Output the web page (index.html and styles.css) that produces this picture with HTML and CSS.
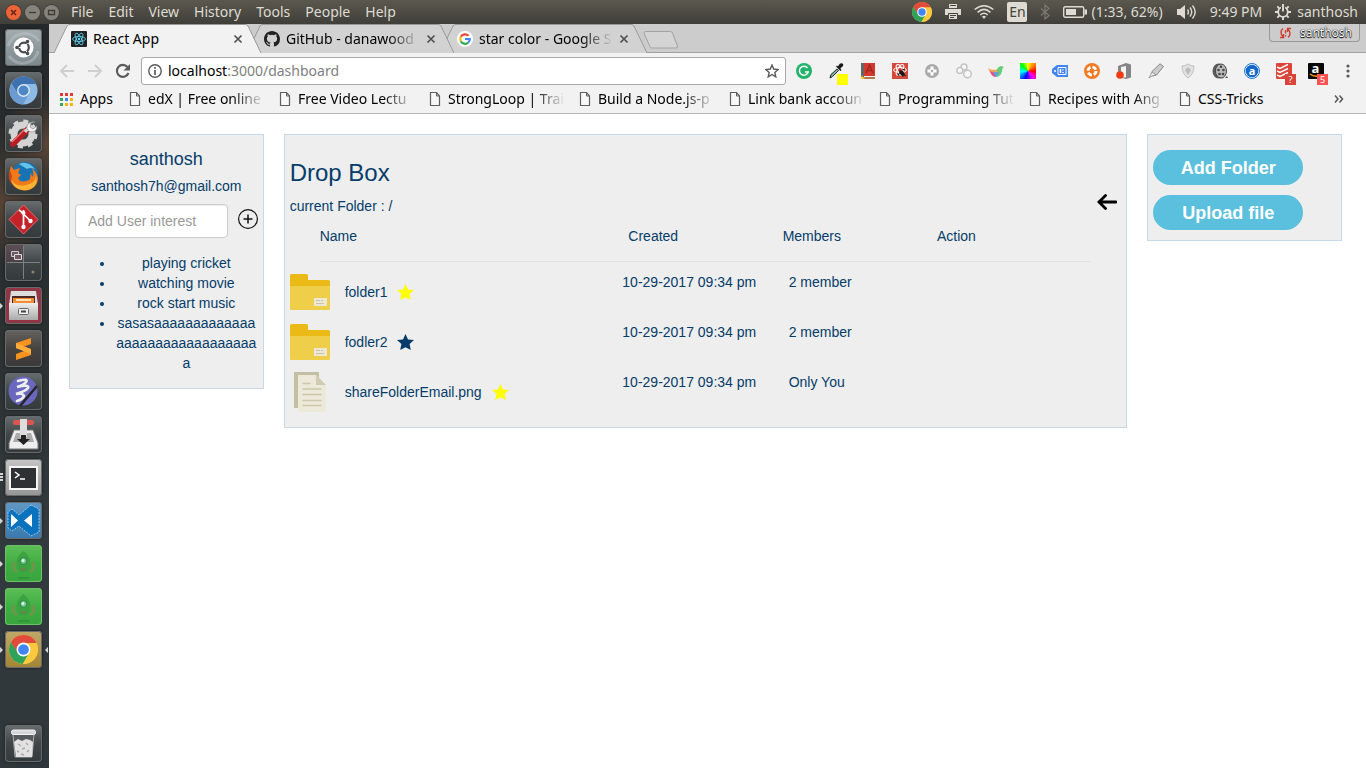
FILE: index.html
```html
<!DOCTYPE html>
<html lang="en">
<head>
<meta charset="utf-8">
<meta name="viewport" content="width=device-width, initial-scale=1">
<title>React App</title>
<link rel="stylesheet" href="styles.css">
</head>
<body>
<svg class="defs" aria-hidden="true">
  <defs>
    <linearGradient id="cabinet-gray" x1="0" y1="0" x2="0" y2="1"><stop offset="0" stop-color="#eee"/><stop offset="1" stop-color="#aaa"/></linearGradient>
  </defs>
  <symbol id="page" viewBox="0 0 12 14"><path d="M1.500 .5h6l3 3.500v9.500h-9z" fill="#f8f8f8" stroke="#5f5f5f" stroke-width="1.200"/><path d="M7.500 .5v3.500h3" fill="none" stroke="#5f5f5f"/></symbol>
  <symbol id="close" viewBox="0 0 10 10"><path d="M1.500 1.500l7 7M8.500 1.500l-7 7" stroke="#505050" stroke-width="1.700"/></symbol>
  <symbol id="chrome" viewBox="0 0 20 20"><circle cx="10" cy="10" r="10" fill="#fbc93d"/><path d="M10 5.500h8.900A10 10 0 0 0 1.340 5L6 13z" fill="#e24a3c"/><path d="M1.340 5A10 10 0 0 0 9.500 20L14 12.500 10 13 6 12z" fill="#2fa35a"/><path d="M10 5.500h8.900A10 10 0 0 1 9.500 20L14 12z" fill="#fbc93d"/><circle cx="10" cy="10" r="4.800" fill="#fff"/><circle cx="10" cy="10" r="3.700" fill="#4285f4"/></symbol>
  <symbol id="folder" viewBox="0 0 40 40"><path d="M0 3.500q0-1.500 1.500-1.500h15q1.500 0 1.500 1.500V8h20.500q1.500 0 1.500 1.500V16H0z" fill="#ebba16"/><path d="M0 14h40v22.500q0 1.500-1.500 1.500h-37Q0 38 0 36.500z" fill="#efce4a"/><path d="M24 26h13v8H24z" fill="#ece8d5"/><path d="M26 28.500h4M31 28.500h2M26 31.500h8" stroke="#c9c3a6"/></symbol>
  <symbol id="star" viewBox="0 0 17 17"><path d="M8.500 0l2.500 5.400 6 .7-4.400 4 1.200 6L8.500 13.200l-5.300 2.900 1.200-6L0 6.100l6-.7z" fill="currentColor"/></symbol>
  <symbol id="crawler" viewBox="0 0 37 37"><path d="M10 17c-3 4-2 8 2 10M27 17c3 4 2 8-2 10" fill="none" stroke="#77914f" stroke-width="2.500"/><path d="M18.500 6c-7 5-8 11-6 18 4 5 8 5 12 0 2-7 1-13-6-18z" fill="#3ba340"/><circle cx="18.500" cy="16" r="3.500" fill="#6fc48c" stroke="#2b8545"/><circle cx="18" cy="15.500" r="1.500" fill="#d8fbe0"/><path d="M15 22.500q3.500 2 7 0v2.500q-3.500 2-7 0z" fill="#5d8a45"/><path d="M13 33h11" stroke="#2a8535"/></symbol>
</svg>

<header class="panel">
  <div class="window-controls">
    <button class="win win-close" aria-label="Close"><svg viewBox="0 0 15 15"><path d="M5 5l5 5M10 5l-5 5" stroke="#5b2411" stroke-width="1.300"/></svg></button>
    <button class="win" aria-label="Minimize"><svg viewBox="0 0 15 15"><path d="M4 7.500h7" stroke="#3c3b37" stroke-width="1.300"/></svg></button>
    <button class="win" aria-label="Maximize"><svg viewBox="0 0 15 15"><path d="M4.500 5.500h6v4h-6z" fill="none" stroke="#3c3b37" stroke-width="1.300"/></svg></button>
  </div>
  <nav class="menu" aria-label="Application menu">
    <button>File</button><button>Edit</button><button>View</button><button>History</button><button>Tools</button><button>People</button><button>Help</button>
  </nav>
  <div class="indicators">
    <svg width="20" height="20"><use href="#chrome"/></svg>
    <svg width="16" height="16" viewBox="0 0 16 16"><path d="M4 0h8v4H4zM0 5h16v6h-3V9H3v2H0z" fill="#dfdbd2"/><path d="M3.500 9.500h9v6h-9z" fill="#dfdbd2" stroke="#45443f"/><path d="M5 11.500h6M5 13.500h4M5 1.500h6" stroke="#45443f"/></svg>
    <svg width="20" height="16" viewBox="0 0 20 16" fill="none" stroke="#dfdbd2" stroke-width="1.600"><path d="M.7 5.500Q10-2 19.300 5.500M3.600 8.300Q10 2.500 16.400 8.300M6.300 11Q10 7.500 13.700 11"/><path d="M8 12.500q2-1.500 4 0l-2 2.500z" fill="#dfdbd2" stroke="none"/></svg>
    <span class="lang">En</span>
    <svg width="10" height="16" viewBox="0 0 10 16"><path d="M1 4.500l8 7-4 3.500V1l4 3.500-8 7" fill="none" stroke="#7c7a73" stroke-width="1.200"/></svg>
    <span class="ind"><svg width="24" height="12" viewBox="0 0 24 12"><rect x=".7" y=".7" width="20" height="10.600" rx="1.500" fill="none" stroke="#dfdbd2" stroke-width="1.400"/><path d="M3 3h10v6H3zM21.500 3.500H24v5h-2.500z" fill="#dfdbd2"/></svg>(1:33, 62%)</span>
    <svg width="21" height="16" viewBox="0 0 21 16"><path d="M1 5h3l5-4v14l-5-4H1z" fill="#dfdbd2"/><path d="M11.500 5.500q2 2.500 0 5M14 3.500q3.500 4.500 0 9M16.500 1.500q5.500 6.500 0 13" fill="none" stroke="#dfdbd2" stroke-width="1.400"/></svg>
    <span class="clock">9:49 PM</span>
    <span class="ind user"><svg width="16" height="16" viewBox="0 0 16 16"><circle cx="8" cy="8" r="4.800" fill="none" stroke="#dfdbd2" stroke-width="1.800"/><path d="M8 2.500v5" stroke="#45443f" stroke-width="4"/><path d="M8 0v7.500M0 8h3M13 8h3M8 13v3M2.300 2.300l2 2M13.700 2.300l-2 2M2.300 13.700l2-2M13.700 13.700l-2-2" stroke="#dfdbd2" stroke-width="1.900"/></svg>santhosh</span>
  </div>
</header>

<div class="desktop">
  <aside class="dock" aria-label="Launcher">
    <button class="tile t-dash" aria-label="Dash"><svg viewBox="0 0 37 37"><path d="M3 17C8 2 27 1 34 12M4 27c9 12 26 8 29-5" fill="none" stroke="#c7d0d3" stroke-opacity=".4" stroke-width="3"/><circle cx="18.500" cy="18.500" r="10" fill="#fff"/><circle cx="19" cy="18.500" r="4.800" fill="none" stroke="#474b4d" stroke-width="2.200"/><path d="M18.500 18.500L25 11.500M18.500 18.500l6 8M19 18.500h-8" stroke="#fff"/><circle cx="12" cy="18.500" r="1.800" fill="#474b4d"/><circle cx="22.500" cy="12.500" r="1.800" fill="#474b4d"/><circle cx="22.500" cy="24.500" r="1.800" fill="#474b4d"/></svg></button>
    <button class="tile" aria-label="Chromium"><svg viewBox="0 0 37 37"><circle cx="18.500" cy="18.500" r="14" fill="#8ebbe6"/><path d="M18.500 12H31A14 14 0 0 0 6.500 11.500L13 22z" fill="#3e71ad"/><path d="M6.500 11.500A14 14 0 0 0 18 32.500L24 22 13 22z" fill="#6b9bd1"/><circle cx="18.500" cy="18.500" r="6.500" fill="#d8e9f8"/><circle cx="18.500" cy="18.500" r="5" fill="#4e86c6"/></svg></button>
    <button class="tile" aria-label="System settings"><svg viewBox="0 0 37 37"><circle cx="18" cy="19" r="9" fill="none" stroke="#d4d4d4" stroke-width="7"/><circle cx="18" cy="19" r="13" fill="none" stroke="#d4d4d4" stroke-width="3" stroke-dasharray="5 5.200"/><path d="M8 29L22 15" stroke="#b51e23" stroke-width="6" stroke-linecap="round"/><path d="M7 27L20 14" stroke="#ea6d68" stroke-width="1.500"/><path d="M20 17l5-6" stroke="#ddd" stroke-width="3"/><path d="M30 7l-4 1-1 4 3 2 4-3q0 6-6 6-5-1-4-6 2-5 8-4z" fill="#f2f2f2" stroke="#888" stroke-width=".7"/></svg></button>
    <button class="tile" aria-label="Firefox"><svg viewBox="0 0 37 37"><circle cx="20" cy="17" r="13" fill="#1873b4"/><path d="M14 6q8-4 16 5-5-2-8 0z" fill="#63c4e8"/><path d="M5 12l1-4 3 4 6-2-2 5 3 2-3 3q2 5 8 3 6-1 4-8l3 4q1-5-1-9 10 10 3 18-8 8-18 2Q2 24 5 12z" fill="#f27a18"/><path d="M5 18q3 12 16 9 10-2 10-10 3 13-9 15Q8 34 5 18z" fill="#ffb332"/><path d="M5 12l2 6-1 7Q2 20 5 12z" fill="#cc451b"/></svg></button>
    <button class="tile" aria-label="Git"><svg viewBox="0 0 37 37"><path d="M18.500 4L33 18.500 18.500 33 4 18.500z" fill="#c52128" stroke="#ee6869" stroke-linejoin="round"/><path d="M18.500 9v18M18.500 13l7 7M14 9l5 4" stroke="#fff" stroke-width="1.700"/><circle cx="18.500" cy="26" r="2.200" fill="#fff"/><circle cx="25.500" cy="20" r="2.200" fill="#fff"/><circle cx="18.500" cy="12" r="2" fill="#fff"/></svg></button>
    <button class="tile" aria-label="Workspaces"><svg viewBox="0 0 37 37"><path d="M1 1h17v17H1z" fill="#563a45" fill-opacity=".6"/><path d="M18.500 2v33M2 18.500h33" stroke="#7b8081"/><path d="M6.500 7.500h7v5h-7z" fill="#6c5861" stroke="#ccc"/><path d="M9.500 10.500h7v5h-7z" fill="#6c5861" stroke="#ddd"/><circle cx="28" cy="28" r="1.500" fill="#8c846d"/></svg></button>
    <button class="tile t-files run" aria-label="Files"><svg viewBox="0 0 37 37"><path d="M6 4h25l2 14H4z" fill="#ddd"/><path d="M7 9h23v9H7z" fill="#4b2822"/><path d="M8 11h21v6H8z" fill="#f58b34"/><path d="M11 13h15" stroke="#ffe0b3" stroke-width="2"/><path d="M4 16h29v17H4z" fill="url(#cabinet-gray)"/><rect x="13.500" y="21.500" width="10" height="6" rx="1" fill="#eee" stroke="#666"/><path d="M16 24.500h5" stroke="#444" stroke-width="2"/></svg></button>
    <button class="tile t-dark" aria-label="Sublime Text"><svg viewBox="0 0 37 37"><path d="M11 13l15-5v6l-8 3 8 3v5l-15 5v-6l8-3-8-3z" fill="#f7931e"/><path d="M11 13l15 6v5l-15-6z" fill="#ffac3c"/></svg></button>
    <button class="tile" aria-label="Emacs"><svg viewBox="0 0 37 37"><circle cx="18" cy="18" r="14.500" fill="#6a67bf"/><path d="M13 8q11-3 8 1-2 3-9 5 13-3 11 1-2 3-12 6 7-1 8 2-1 3-7 5" fill="none" stroke="#eee" stroke-width="2.600" stroke-linecap="round"/><path d="M15 33L32 13" stroke="#252525" stroke-width="2.500"/></svg></button>
    <button class="tile" aria-label="Startup disk"><svg viewBox="0 0 37 37"><path d="M9 14h19l5 13v6H4v-6z" fill="#eee" stroke="#777"/><path d="M11 17h15l3 9H8z" fill="#aaa"/><rect x="8" y="4" width="21" height="5" rx="2" fill="#dc5555"/><path d="M15 3h7v18h-7z" fill="#ddd"/><path d="M16 19h5v4h4l-6.500 6L12 23h4z" fill="#222"/></svg></button>
    <button class="tile t-silver windows" aria-label="Terminal"><svg viewBox="0 0 37 37"><path d="M5 8h27v22H5z" fill="#2e3033" stroke="#f4f4f4" stroke-width="2"/><path d="M10 13l4 3-4 3M15 20h5" fill="none" stroke="#fff" stroke-width="1.500"/></svg></button>
    <button class="tile t-code run" aria-label="VS Code"><svg viewBox="0 0 37 37"><path d="M26 3l8 4v23l-8 4-12-10-7 5-4-3V10l4-3 7 6z" fill="#0b72bd" stroke="#8ec5eb" stroke-dasharray="2 1"/><path d="M6 12l7 6.500L6 25zM27 12v13l-8-6.500z" fill="#fff"/></svg></button>
    <button class="tile t-green run" aria-label="Robomongo"><svg><use href="#crawler"/></svg></button>
    <button class="tile t-green run" aria-label="Robomongo"><svg><use href="#crawler"/></svg></button>
    <button class="tile t-chrome run active" aria-label="Chrome"><svg viewBox="0 0 37 37"><use href="#chrome" x="4" y="4" width="29" height="29"/></svg></button>
    <button class="tile trash" aria-label="Trash"><svg viewBox="0 0 37 37"><path d="M8 9l2 23h17l2-23z" fill="#565c5e" stroke="#aaa"/><path d="M9 17l4-3 4 2 4-2 4 1 3 2-1 15H11z" fill="#e2e2e2"/><path d="M13 19l3 2M21 18l2 2M17 24l3-1M12 26l2 1M24 25l-2 2M16 29l3 1" fill="none" stroke="#aaa" stroke-width="1.500"/><rect x="6.500" y="5" width="24" height="4.500" rx="2" fill="#d5d8d8" stroke="#f5f5f5"/></svg></button>
  </aside>

  <div class="browser">
    <div class="tabs">
      <div class="tab current">
        <svg class="tab-shape" viewBox="0 0 207 29" preserveAspectRatio="none"><path d="M0 29L13 2q1-1.500 3-1.500h175q2 0 3 1.500L207 29" fill="#f2f2f2" stroke="#999"/></svg>
        <svg class="fav" viewBox="0 0 16 16"><rect width="16" height="16" rx="1" fill="#222"/><g fill="none" stroke="#61dafb" stroke-width=".8"><ellipse cx="8" cy="8" rx="6.500" ry="2.500"/><ellipse cx="8" cy="8" rx="6.500" ry="2.500" transform="rotate(60 8 8)"/><ellipse cx="8" cy="8" rx="6.500" ry="2.500" transform="rotate(120 8 8)"/></g><circle cx="8" cy="8" r="1.200" fill="#61dafb"/></svg>
        <span class="tab-title">React App</span><button class="tab-close" aria-label="Close tab"><svg><use href="#close"/></svg></button>
      </div>
      <div class="tab second">
        <svg class="tab-shape" viewBox="0 0 207 29" preserveAspectRatio="none"><path d="M0 29L13 2q1-1.500 3-1.500h175q2 0 3 1.500L207 29" fill="#d2d2d2" stroke="#999"/></svg>
        <svg class="fav" viewBox="0 0 16 16"><path fill="#222" d="M8 0C3.580 0 0 3.580 0 8c0 3.540 2.290 6.530 5.470 7.590.4.070.55-.17.55-.38 0-.19-.01-.82-.01-1.490-2.010.37-2.530-.49-2.690-.94-.09-.23-.48-.94-.82-1.130-.28-.15-.68-.52-.01-.53.630-.01 1.080.58 1.230.82.720 1.210 1.870.87 2.330.66.070-.52.28-.87.510-1.070-1.780-.2-3.640-.89-3.640-3.950 0-.87.31-1.590.82-2.150-.08-.2-.36-1.020.08-2.120 0 0 .67-.21 2.200.82a7.400 7.400 0 014 0c1.530-1.040 2.200-.82 2.200-.82.44 1.100.16 1.920.08 2.120.51.560.82 1.270.82 2.150 0 3.070-1.870 3.750-3.650 3.950.29.250.54.730.54 1.480 0 1.070-.01 1.930-.01 2.200 0 .21.15.46.55.38A8 8 0 0016 8c0-4.420-3.580-8-8-8z"/></svg>
        <span class="tab-title fade">GitHub - danawood</span><button class="tab-close" aria-label="Close tab"><svg><use href="#close"/></svg></button>
      </div>
      <div class="tab">
        <svg class="tab-shape" viewBox="0 0 207 29" preserveAspectRatio="none"><path d="M0 29L13 2q1-1.500 3-1.500h175q2 0 3 1.500L207 29" fill="#d2d2d2" stroke="#999"/></svg>
        <svg class="fav" viewBox="0 0 16 16"><circle cx="8" cy="8" r="8" fill="#fff"/><g fill="none" stroke-width="2.200"><path d="M11.500 4.800A4.800 4.800 0 0 0 3.800 5.800" stroke="#ea4335"/><path d="M3.800 5.800a4.800 4.800 0 0 0 0 4.400" stroke="#fbbc05"/><path d="M3.800 10.200a4.800 4.800 0 0 0 7.500 1.300" stroke="#34a853"/><path d="M11.300 11.500A4.800 4.800 0 0 0 12.800 8H8" stroke="#4285f4"/></g></svg>
        <span class="tab-title fade">star color - Google S</span><button class="tab-close" aria-label="Close tab"><svg><use href="#close"/></svg></button>
      </div>
      <button class="new-tab" aria-label="New tab"><svg viewBox="0 0 36 18"><path d="M2.500 .5h25q1.500 0 2 1.500l5 13q.5 2-1.500 2H9q-1.500 0-2-1.500L1 2.500Q.5.500 2.500.5z" fill="#d4d4d4" stroke="#a2a2a2"/></svg></button>
      <button class="profile"><svg width="13" height="12" viewBox="0 0 13 12"><path d="M4 1.500a5 5 0 0 0 0 8M1 10.500h3.500V7M9 10.500a5 5 0 0 0 0-8M12 1.500H8.500V5" fill="none" stroke="#d3392d" stroke-width="1.400"/><path d="M6.500 3v3.500M6.500 8v1.500" stroke="#d3392d" stroke-width="1.300"/></svg><span>santhosh</span></button>
    </div>

    <div class="toolbar">
      <button class="nav-btn" aria-label="Back"><svg viewBox="0 0 16 16"><path d="M15 8H2M8 2L2 8l6 6" fill="none" stroke="#cfcfcf" stroke-width="2"/></svg></button>
      <button class="nav-btn" aria-label="Forward"><svg viewBox="0 0 16 16"><path d="M1 8h13M8 2l6 6-6 6" fill="none" stroke="#cfcfcf" stroke-width="2"/></svg></button>
      <button class="nav-btn" aria-label="Reload"><svg viewBox="0 0 16 16"><path d="M13.500 10A6 6 0 1 1 12.500 4" fill="none" stroke="#5a5a5a" stroke-width="2.100"/><path d="M15 1v6.500H8.500z" fill="#5a5a5a"/></svg></button>
      <div class="omnibox">
        <svg width="14" height="14" viewBox="0 0 14 14"><circle cx="7" cy="7" r="6.200" fill="none" stroke="#5a5a5a" stroke-width="1.400"/><path d="M7 3v1.700M7 6v5" stroke="#5a5a5a" stroke-width="1.700"/></svg>
        <a class="url" href="#dashboard">localhost<span>:3000/dashboard</span></a>
        <svg width="14" height="14" viewBox="0 0 14 14"><path d="M7 1l1.700 4 4.500.5-3.400 3 1 4.400L7 10.500l-3.800 2.400 1-4.400-3.400-3 4.500-.5z" fill="none" stroke="#5a5a5a" stroke-width="1.400"/></svg>
      </div>
      <div class="extensions">
        <button aria-label="Grammarly"><svg viewBox="0 0 16 16"><circle cx="8" cy="8" r="8" fill="#24b36b"/><path d="M11.500 5a4.500 4.500 0 1 0 .7 4H9" fill="none" stroke="#fff" stroke-width="1.500"/></svg></button>
        <button aria-label="Color picker"><svg viewBox="0 0 16 16"><path d="M2 15l1-3.500L9 6l1.500 1.500-6 6z" fill="#82bc9c" stroke="#222"/><path d="M8 3.500L12.500 8l1-1-1.200-1.500L15 3q.8-1.500-.5-2.500Q13-.3 11.500 1L10 3.500 9 2.500z" fill="#181818"/></svg><i class="badge yellow"></i></button>
        <button aria-label="Dictionary"><svg viewBox="0 0 16 16"><path d="M1 0h3v14H1z" fill="#666"/><path d="M4 0h11v13H4z" fill="#d33a2f"/><path d="M6 10l3.500-8L13 10M7.500 7.500h4" fill="none" stroke="#a12720" stroke-width="1.500"/><path d="M2 14h13v2H4z" fill="#ad7a50"/><path d="M2 12l1 2 2 .5-1.500 1.500H1z" fill="#ffbf21"/></svg></button>
        <button aria-label="React tools"><svg viewBox="0 0 16 16"><rect width="16" height="16" fill="#d5493c"/><g fill="none" stroke="#fff"><ellipse cx="8" cy="7" rx="6.500" ry="2.500"/><ellipse cx="8" cy="7" rx="6" ry="2.500" transform="rotate(60 8 7)"/><ellipse cx="8" cy="7" rx="6" ry="2.500" transform="rotate(120 8 7)"/></g><path d="M7 7l4 1 2 3-2 3-3-3z" fill="#171717"/><path d="M8 9l-2 4M10 7l3-1M12 12l2 1" stroke="#171717"/></svg></button>
        <button aria-label="Gamepad"><svg viewBox="0 0 16 16"><circle cx="8" cy="8" r="7" fill="#aaa"/><path d="M6.500 3.500h3v3h3v3h-3v3h-3v-3h-3v-3h3z" fill="#fff"/><circle cx="8" cy="8" r="1.300" fill="#aaa"/></svg></button>
        <button aria-label="Circles"><svg viewBox="0 0 16 16" fill="#f7f7f7" stroke="#c4c4c4" stroke-width="1.500"><circle cx="8" cy="4" r="3"/><circle cx="3.800" cy="7.500" r="3"/><circle cx="11.500" cy="11" r="3.800"/></svg></button>
        <button aria-label="Bird"><svg viewBox="0 0 16 16"><path d="M0 5q6 4 11 0 1 7-5 7Q2 11 0 5z" fill="#ffa253"/><path d="M2 8q6 3 9 0 0 6-4 6-4-1-5-6z" fill="#ea4b87"/><path d="M9 8q0-4 4-5l3 1q-2 1-2 4-1 6-7 6 3-2 2-6z" fill="#63ce77"/><path d="M5 8q3 3 6 1-1 4-4 4z" fill="#4eabed"/></svg></button>
        <button aria-label="Color wheel"><i class="wheel"></i></button>
        <button aria-label="Tag"><svg viewBox="0 0 16 16"><path d="M5 2h11v12H5L0 10V6z" fill="#4285f4"/><path d="M6 4.500h8v7H6z" fill="none" stroke="#fff"/><path d="M8.500 6v4M11 6.500v1M11 9v1" stroke="#fff" stroke-width="1.500"/><circle cx="3" cy="8" r="1" fill="#fff"/></svg></button>
        <button aria-label="Orange disc"><svg viewBox="0 0 16 16"><circle cx="8" cy="8" r="8" fill="#f37a24"/><circle cx="8" cy="8" r="4" fill="none" stroke="#fff" stroke-width="2.800" stroke-dasharray="4.300 2"/></svg></button>
        <button aria-label="Office"><svg viewBox="0 0 16 16"><path d="M2 3l8-3 5 1.500v13L10 16l-7-2 7 .5V3L5 4v6l-3 1z" fill="#858585"/><circle cx="4" cy="12" r="3.800" fill="#f33a10"/></svg></button>
        <button aria-label="Highlighter"><svg viewBox="0 0 16 16"><path d="M4 8.500L12 .8l3.500 2.700L8.500 12l-4 1z" fill="#ccc" stroke="#888"/><path d="M4 9l4 3-4 1-3 2z" fill="#eee" stroke="#888" stroke-width=".8"/></svg></button>
        <button aria-label="Shield"><svg viewBox="0 0 16 16"><path d="M8 1q3 2 6 2 0 8-6 12Q2 11 2 3q3 0 6-2z" fill="#e2e2e2" stroke="#c2c2c2"/><path d="M8 4l3 3-3 5-3-5z" fill="#bbb"/></svg></button>
        <button aria-label="Film"><svg viewBox="0 0 16 16"><ellipse cx="6.500" cy="8" rx="6" ry="7.500" fill="#5c5c5c"/><ellipse cx="9" cy="8" rx="5.500" ry="7" fill="#bbb" stroke="#444"/><g fill="#444"><circle cx="9" cy="3.800" r="1.300"/><circle cx="6.500" cy="7" r="1.300"/><circle cx="11.500" cy="7" r="1.300"/><circle cx="7.500" cy="11" r="1.300"/><circle cx="11" cy="11" r="1.300"/></g><path d="M9 15q4 1 6-2l1 2z" fill="#555"/></svg></button>
        <button aria-label="Assistant"><svg viewBox="0 0 16 16"><circle cx="8" cy="8" r="7.500" fill="#fff" stroke="#1976d2"/><circle cx="8" cy="8" r="6.300" fill="#1267c8"/><text x="8" y="11.500" class="ico-text">a</text></svg></button>
        <button aria-label="Todoist"><svg viewBox="0 0 16 16"><rect width="16" height="16" rx="1" fill="#dc4437"/><path d="M1 4l3 1.500 8-4M1 8l3 1.500 8-4M1 12l3 1.500 8-4" fill="none" stroke="#fff" stroke-width="1.500"/></svg><i class="badge dark-red">?</i></button>
        <button aria-label="Amazon"><svg viewBox="0 0 16 16"><rect width="16" height="16" rx="1" fill="#080808"/><text x="7.500" y="10" class="ico-text big">a</text><path d="M2 11q5 4 11 1" fill="none" stroke="#f90" stroke-width="1.500"/></svg><i class="badge red">5</i></button>
        <button aria-label="Menu"><svg viewBox="0 0 16 16" fill="#5a5a5a"><circle cx="8" cy="3" r="1.600"/><circle cx="8" cy="8" r="1.600"/><circle cx="8" cy="13" r="1.600"/></svg></button>
      </div>
    </div>

    <nav class="bookmarks" aria-label="Bookmarks">
      <a class="apps" href="#apps"><svg width="13" height="13" viewBox="0 0 13 13"><path d="M0 0h3v3H0zM5 0h3v3H5zM10 0h3v3h-3z" fill="#e53935"/><path d="M0 5h3v3H0z" fill="#34a853"/><path d="M5 5h3v3H5z" fill="#4285f4"/><path d="M10 5h3v3h-3z" fill="#f4b400"/><path d="M0 10h3v3H0z" fill="#34a853"/><path d="M5 10h3v3H5zM10 10h3v3h-3z" fill="#f4b400"/></svg>Apps</a>
      <a href="#b1"><svg><use href="#page"/></svg><span class="fade">edX | Free online</span></a>
      <a href="#b2"><svg><use href="#page"/></svg><span class="fade">Free Video Lectu</span></a>
      <a href="#b3"><svg><use href="#page"/></svg><span class="fade">StrongLoop | Trai</span></a>
      <a href="#b4"><svg><use href="#page"/></svg><span class="fade">Build a Node.js-p</span></a>
      <a href="#b5"><svg><use href="#page"/></svg><span class="fade">Link bank accoun</span></a>
      <a href="#b6"><svg><use href="#page"/></svg><span class="fade">Programming Tut</span></a>
      <a href="#b7"><svg><use href="#page"/></svg><span class="fade">Recipes with Ang</span></a>
      <a href="#b8"><svg><use href="#page"/></svg><span>CSS-Tricks</span></a>
      <button class="more" aria-label="More bookmarks"><svg width="10" height="8" viewBox="0 0 10 8"><path d="M1 .5L4 4 1 7.500M5.500 .5l3 3.500-3 3.500" fill="none" stroke="#555" stroke-width="1.500"/></svg></button>
    </nav>

    <main class="page">
      <aside class="card profile-card">
        <h4>santhosh</h4>
        <p>santhosh7h@gmail.com</p>
        <form class="interest">
          <input type="text" placeholder="Add User interest" aria-label="Add User interest">
          <button type="button" aria-label="Add"><svg width="20" height="20" viewBox="0 0 20 20"><circle cx="10" cy="10" r="9.400" fill="none" stroke="#111" stroke-width="1.200"/><path d="M10 5.500v9M5.500 10h9" stroke="#111" stroke-width="1.500"/></svg></button>
        </form>
        <ul>
          <li>playing cricket</li><li>watching movie</li><li>rock start music</li><li>sasasaaaaaaaaaaaaaaaaaaaaaaaaaaaaaaaa</li>
        </ul>
      </aside>

      <section class="card">
        <div class="box-head">
          <div><h3>Drop Box</h3><p>current Folder : /</p></div>
          <button class="back" aria-label="Parent folder"><svg width="20" height="16" viewBox="0 0 20 16"><path d="M19 8H2M8.500 1.500L2 8l6.500 6.500" fill="none" stroke="#000" stroke-width="2.800" stroke-linecap="round"/></svg></button>
        </div>
        <table class="files">
          <thead><tr><th>Name</th><th>Created</th><th>Members</th><th>Action</th></tr></thead>
          <tbody>
            <tr><td><div class="file"><svg class="file-icon"><use href="#folder"/></svg>folder1<button class="star on" aria-label="Unstar"><svg><use href="#star"/></svg></button></div></td><td>10-29-2017 09:34 pm</td><td>2 member</td><td></td></tr>
            <tr><td><div class="file"><svg class="file-icon"><use href="#folder"/></svg>fodler2<button class="star" aria-label="Star"><svg><use href="#star"/></svg></button></div></td><td>10-29-2017 09:34 pm</td><td>2 member</td><td></td></tr>
            <tr><td><div class="file"><svg class="file-icon" viewBox="0 0 40 40"><path d="M4 0h29v36H4z" fill="#c3bfa3"/><path d="M8 3h18l10 10v27H8z" fill="#ece9d8"/><path d="M26 3V0h10v13z" fill="#eee"/><path d="M26 0h3v6l-3-3z" fill="#c3bfa3"/><path d="M26 3l10 10H26z" fill="#d0cbb3"/><path d="M13 11.500h7M13 17h18M13 22.500h18M13 28.500h18M13 33.500h18" stroke="#ccc7ac" stroke-width="1.300" stroke-linecap="round"/></svg>shareFolderEmail.png<button class="star on" aria-label="Unstar"><svg><use href="#star"/></svg></button></div></td><td>10-29-2017 09:34 pm</td><td>Only You</td><td></td></tr>
          </tbody>
        </table>
      </section>

      <aside class="card actions">
        <button>Add Folder</button>
        <button>Upload file</button>
      </aside>
    </main>
  </div>
</div>
</body>
</html>
```
FILE: styles.css
```css
* { box-sizing: border-box; }
body {
  margin: 0;
  min-height: 100vh;
  display: flex;
  flex-direction: column;
  font: 14px/20px "Noto Sans", sans-serif;
  background: #fff;
}
button { margin: 0; padding: 0; border: 0; background: none; font: inherit; color: inherit; }
a { color: inherit; text-decoration: none; }
svg { display: block; flex: none; }
h3, h4, p, ul { margin: 0; font-weight: normal; }
.defs { position: absolute; width: 0; height: 0; }
.fade { mask-image: linear-gradient(90deg, #000 calc(100% - 32px), transparent); }

/* Desktop panel */
.panel {
  display: flex;
  align-items: center;
  height: 24px;
  padding: 0 8px 0 6px;
  color: #dfdbd2;
  background: linear-gradient(#5b584e, #3f3e39);
  white-space: nowrap;
}
.window-controls { display: flex; gap: 4px; margin-right: 12px; }
.win { width: 15px; height: 15px; border-radius: 8px; background: #85837b; box-shadow: 0 0 0 1px #45433d; }
.win-close { background: #ee6338; }
.menu { display: flex; gap: 15px; flex: 1; }
.indicators { display: flex; align-items: center; gap: 13px; }
.lang { width: 20px; line-height: 20px; border-radius: 2px; background: #dfdbd2; color: #45433d; text-align: center; }
.ind { display: flex; align-items: center; gap: 4px; }
.user { gap: 6px; }

/* Launcher */
.desktop { display: flex; flex: 1; }
.dock {
  display: flex;
  flex-direction: column;
  gap: 6px;
  width: 49px;
  padding: 5px 7px 6px 5px;
  background:
    radial-gradient(circle at 90% 120px, #5b4638 0, transparent 50px),
    radial-gradient(circle at 0 180px, #574335 0, transparent 60px),
    linear-gradient(#25292b, #2b3031 300px, #333a3d 500px, #30373a);
}
.tile {
  position: relative;
  width: 37px;
  height: 37px;
  border-radius: 4px;
  background: linear-gradient(#686d6f, #404546 50%, #343a3c);
  box-shadow: inset 0 0 0 1px #666b6d, 0 0 3px #0008;
}
.tile svg { width: 37px; height: 37px; }
.t-dash { background: linear-gradient(#a3acaf, #7c888c); }
.t-files { background: #8f3544; }
.t-dark { background: linear-gradient(#66625f, #464341 50%, #3b3937); }
.t-silver { background: linear-gradient(#c4c4c4, #959595); }
.t-code { background: linear-gradient(#6198c4, #3978ae); }
.t-green { background: linear-gradient(#5ebd57, #3fae42 50%, #38a53d); box-shadow: inset 0 0 0 1px #6cc067; }
.t-chrome { background: linear-gradient(#c0a868, #a38434); }
.run::before, .active::after {
  content: "";
  position: absolute;
  top: 16px;
  left: -5px;
  border: 3px solid transparent;
  border-left-color: #d5d5d5;
  border-right-width: 0;
}
.active::after { left: 40px; border-width: 3px 3px 3px 0; border-right-color: #d5d5d5; }
.windows::before {
  content: "";
  position: absolute;
  top: 14px;
  left: -5px;
  width: 3px;
  height: 8px;
  background: repeating-linear-gradient(#d5d5d5 0 2px, transparent 2px 3px);
}
.trash { margin-top: auto; }

/* Browser chrome */
.browser { display: flex; flex-direction: column; flex: 1; min-width: 0; }
.tabs { display: flex; height: 29px; padding: 0 6px 0 5px; background: #ccc; border-bottom: 1px solid #a0a0a0; }
.tab {
  position: relative;
  isolation: isolate;
  display: flex;
  align-items: center;
  width: 207px;
  height: 29px;
  margin-right: -14px;
  padding: 0 17px;
}
.second { z-index: 1; }
.current { z-index: 2; }
.tab-shape { position: absolute; inset: 0; width: 100%; height: 100%; z-index: -1; }
.fav { width: 16px; height: 16px; margin-right: 6px; }
.tab-title, .bookmarks span { flex: 1; overflow: hidden; white-space: nowrap; }
.tab-close { margin-left: 6px; padding-right: 1px; }
.tab-close svg { width: 10px; height: 10px; }
.new-tab { margin: 7px 0 0 10px; align-self: flex-start; }
.new-tab svg { width: 36px; height: 18px; }
.profile {
  display: flex;
  align-items: center;
  gap: 8px;
  height: 18px;
  margin-left: auto;
  padding: 0 7px 0 9px;
  border: 1px solid #999;
  border-top: 0;
  border-radius: 0 0 4px 4px;
  font-size: 12px;
  color: #fff;
  text-shadow: 0 0 1px #000, 0 0 1px #000, 0 1px 1px #000;
}

.toolbar { display: flex; align-items: center; height: 36px; padding: 0 2px 0 4px; background: #f2f2f2; }
.nav-btn { display: grid; place-items: center; width: 28px; height: 28px; }
.nav-btn svg { width: 16px; height: 16px; }
.omnibox {
  display: flex;
  align-items: center;
  flex: 1;
  gap: 6px;
  height: 28px;
  margin-left: 4px;
  padding: 0 6px;
  border: 1px solid #a8a8a8;
  border-radius: 3px;
  background: #fff;
}
.url { flex: 1; color: #000; }
.url span { color: #808080; }
.extensions { display: flex; margin-left: 2px; }
.extensions button { position: relative; display: grid; place-items: center; width: 32px; height: 28px; }
.extensions svg { width: 16px; height: 16px; overflow: visible; }
.badge { position: absolute; left: 17px; top: 17px; width: 11px; height: 11px; font: 9px/11px "Noto Sans", sans-serif; color: #fff; }
.yellow { background: #ff0; }
.dark-red { background: #d9453b; }
.red { background: #ff5252; }
.wheel { width: 16px; height: 16px; background: conic-gradient(#ff0, #f00 90deg, #f0f 140deg, #00f 200deg, #0ff 265deg, #0f0 315deg, #ff0); }
.ico-text { font: bold 11px "Open Sans", sans-serif; fill: #fff; text-anchor: middle; }
.big { font-size: 13px; }

.bookmarks { display: flex; height: 25px; align-items: center; padding: 0 20px 4px 11px; background: #f2f2f2; border-bottom: 1px solid #b6b6b6; color: #000; }
.bookmarks a { display: flex; align-items: center; gap: 7px; width: 150px; padding-right: 14px; }
.bookmarks a svg { width: 12px; height: 14px; }
.bookmarks .apps { width: 69px; padding: 0; }
.bookmarks .apps svg { width: 13px; height: 13px; }
.more { margin-left: auto; padding-right: 2px; }

/* Dashboard */
.page {
  display: grid;
  grid-template-columns: minmax(0, 3fr) minmax(0, 13fr) minmax(0, 3fr);
  align-items: start;
  gap: 20px;
  padding: 20px 24px 20px 20px;
  font-family: "Liberation Sans", Arial, sans-serif;
  color: #053c69;
}
.card { padding: 5px; border: 1px solid #c9d8e6; background: #eee; }
.profile-card { text-align: center; }
.profile-card h4 { margin: 9px 0 7px; font-size: 18px; }
.interest { display: flex; gap: 10px; margin: 8px 0 15px; }
.interest input {
  flex: 1;
  min-width: 0;
  height: 34px;
  padding: 6px 12px;
  border: 1px solid #ccc;
  border-radius: 4px;
  background: #fff;
  font: inherit;
  box-shadow: inset 0 1px 1px #00000013;
}
.interest input::placeholder { color: #999; }
.interest button { align-self: flex-start; margin-top: 5px; }
.profile-card ul { margin-bottom: 10px; padding-left: 40px; overflow-wrap: break-word; }

.box-head { display: flex; justify-content: space-between; align-items: flex-end; }
.box-head h3 { margin: 20px 0 10px; font-size: 24px; line-height: 26px; }
.back { margin: 0 4px 6px 0; }
.files, .files thead, .files tbody { display: block; }
.files th { padding: 0; font-weight: normal; text-align: left; }
.files td { padding: 0; }
.files tr { display: grid; grid-template-columns: 2fr 1fr 1fr 1fr; }
.files thead { margin: 10px 30px; padding-bottom: 15px; border-bottom: 1px solid #e2e2e2; }
.files tbody tr { min-height: 50px; }
.file { display: flex; align-items: center; height: 40px; }
.file-icon { width: 40px; height: 40px; margin-right: 15px; }
.star { margin-left: 10px; color: #053c69; }
.star svg { width: 17px; height: 17px; }
.on { color: #ff0; }

.actions button {
  display: block;
  width: 150px;
  height: 35px;
  margin: 10px 0;
  border-radius: 20px;
  background: #5bc0de;
  color: #fff;
  font-size: 18px;
  font-weight: bold;
}
.actions button:last-child { margin-bottom: 5px; }
```
